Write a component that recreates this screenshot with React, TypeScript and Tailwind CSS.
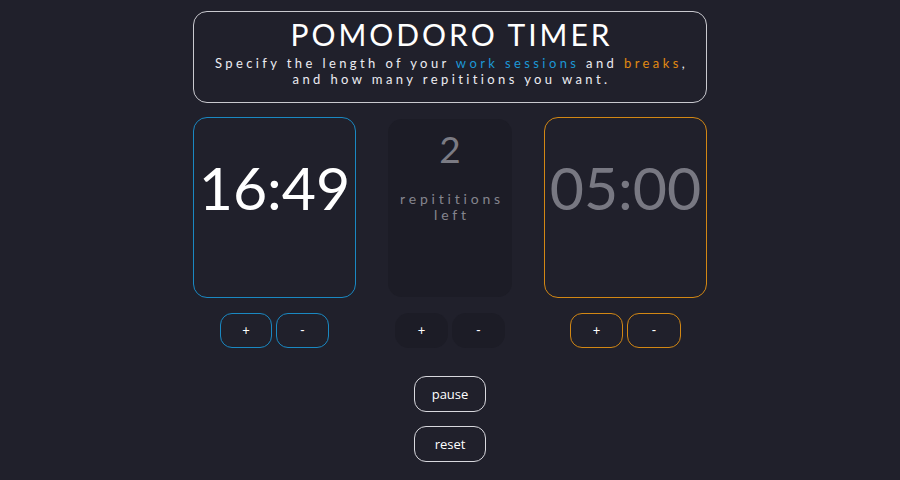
import React from "react";

export default function App() {
  return (
    <div className="min-h-[480px] w-full bg-[#20202b] flex flex-col items-center pt-[11px] font-['Lato',sans-serif]">
      <div className="w-[514px] h-[92px] border border-[#c9c9cf] rounded-[14px] flex flex-col items-center pt-[4px]">
        <h1 className="text-[30px] leading-[36px] tracking-[3px] pl-[3px] text-white font-normal">POMODORO TIMER</h1>
        <p className="text-[13px] leading-[16px] tracking-[3.4px] text-[#ececf2] text-center mt-[3px] pl-[3px]">
          Specify the length of your <span className="text-[#1c97d6]">work sessions</span> and{" "}
          <span className="text-[#e08a12]">breaks</span>,<br />
          and how many repititions you want.
        </p>
      </div>

      <div className="flex gap-8 mt-[14px]">
        <div className="flex flex-col items-center">
          <div className="w-[163px] h-[181px] border border-[#1a88c2] rounded-[14px] flex justify-center pt-[35px]">
            <span className="text-[59px] leading-[70px] text-white">16:49</span>
          </div>
          <div className="flex gap-[4px] mt-[15px]">
            <button className="w-[52px] h-[35px] border border-[#1a88c2] rounded-[12px] text-white text-[13px]">+</button>
            <button className="w-[53px] h-[35px] border border-[#1a88c2] rounded-[12px] text-white text-[13px]">-</button>
          </div>
        </div>

        <div className="flex flex-col items-center">
          <div className="w-[124px] h-[178px] mt-[2px] bg-[#1c1c26] rounded-[14px] flex flex-col items-center pt-[8px]">
            <span className="text-[37px] leading-[44px] text-[#7b7b84]">2</span>
            <span className="text-[14px] leading-[16px] tracking-[3.8px] text-[#85858e] text-center mt-[20px] pl-[4px]">
              repititions
            </span>
            <span className="text-[14px] leading-[16px] tracking-[3.8px] text-[#85858e] text-center pl-[4px]">
              left
            </span>
          </div>
          <div className="flex gap-[4px] mt-[16px]">
            <button className="w-[53px] h-[35px] bg-[#1c1c26] rounded-[14px] text-white text-[13px]">+</button>
            <button className="w-[53px] h-[35px] bg-[#1c1c26] rounded-[14px] text-white text-[13px]">-</button>
          </div>
        </div>

        <div className="flex flex-col items-center">
          <div className="w-[163px] h-[181px] border border-[#d28714] rounded-[14px] flex justify-center pt-[35px]">
            <span className="text-[59px] leading-[70px] text-[#787882]">05:00</span>
          </div>
          <div className="flex gap-[4px] mt-[15px]">
            <button className="w-[53px] h-[35px] border border-[#d28714] rounded-[12px] text-white text-[13px]">+</button>
            <button className="w-[54px] h-[35px] border border-[#d28714] rounded-[12px] text-white text-[13px]">-</button>
          </div>
        </div>
      </div>

      <button className="mt-[28px] w-[72px] h-[36px] border border-[#d8d8de] rounded-[12px] text-white text-[13px] pt-[2px] font-['Open_Sans',sans-serif]">
        pause
      </button>
      <button className="mt-[14px] w-[72px] h-[36px] border border-[#d8d8de] rounded-[12px] text-white text-[13px] pt-[2px] font-['Open_Sans',sans-serif]">
        reset
      </button>
    </div>
  );
}
